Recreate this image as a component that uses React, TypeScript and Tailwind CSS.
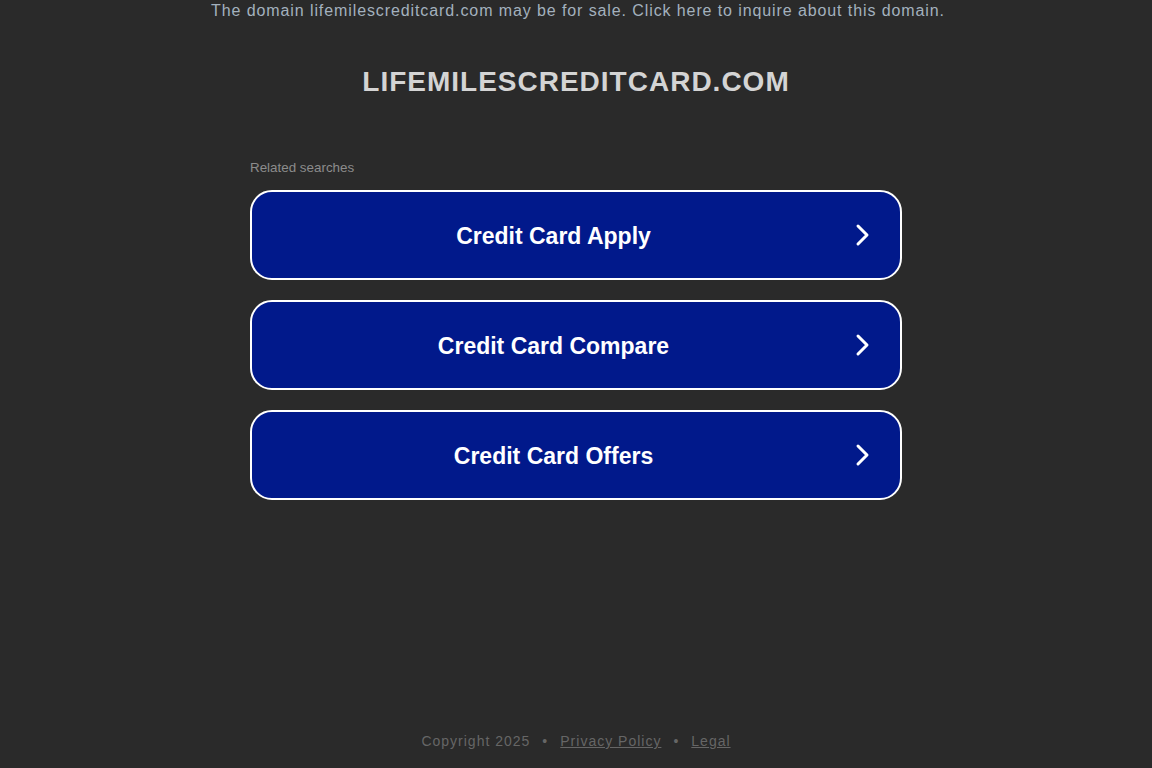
import React from "react";

function Chevron() {
  return (
    <svg width="16" height="24" viewBox="0 0 16 24" fill="none">
      <path d="M3 3 L12 12 L3 21" stroke="white" strokeWidth="3" strokeLinecap="round" strokeLinejoin="round" />
    </svg>
  );
}

const items = ["Credit Card Apply", "Credit Card Compare", "Credit Card Offers"];

export default function App() {
  return (
    <div className="min-h-[768px] h-[768px] bg-[#2a2a2a] flex flex-col items-center" style={{ fontFamily: '"Liberation Sans", Arial, sans-serif' }}>
      <div className="text-[16px] leading-[22px] tracking-[0.9px] text-[#a3b1be] text-center pl-[4px]">
        The domain lifemilescreditcard.com may be for sale. Click here to inquire about this domain.
      </div>
      <h1 className="mt-[44px] text-[28px] leading-[32px] font-bold tracking-[1px] text-[#d4d4d4] text-center">
        LIFEMILESCREDITCARD.COM
      </h1>
      <div className="mt-[61px] w-[652px]">
        <div className="text-[13.4px] leading-[18px] text-[#8c8c8c]">Related searches</div>
        <div className="mt-[13px] flex flex-col gap-[20px]">
          {items.map((t) => (
            <div key={t} className="h-[90px] rounded-[22px] border-2 border-white bg-[#01198b] flex items-center pr-[29px]">
              <div className="flex-1 text-center text-white font-bold text-[23px] pt-[2px]">{t}</div>
              <Chevron />
            </div>
          ))}
        </div>
      </div>
      <div className="flex-1" />
      <div className="mb-[16px] text-[14px] tracking-[1px] text-[#666666] flex items-center gap-[12px]">
        <span>Copyright 2025</span>
        <span>•</span>
        <span className="underline">Privacy Policy</span>
        <span>•</span>
        <span className="underline">Legal</span>
      </div>
    </div>
  );
}
